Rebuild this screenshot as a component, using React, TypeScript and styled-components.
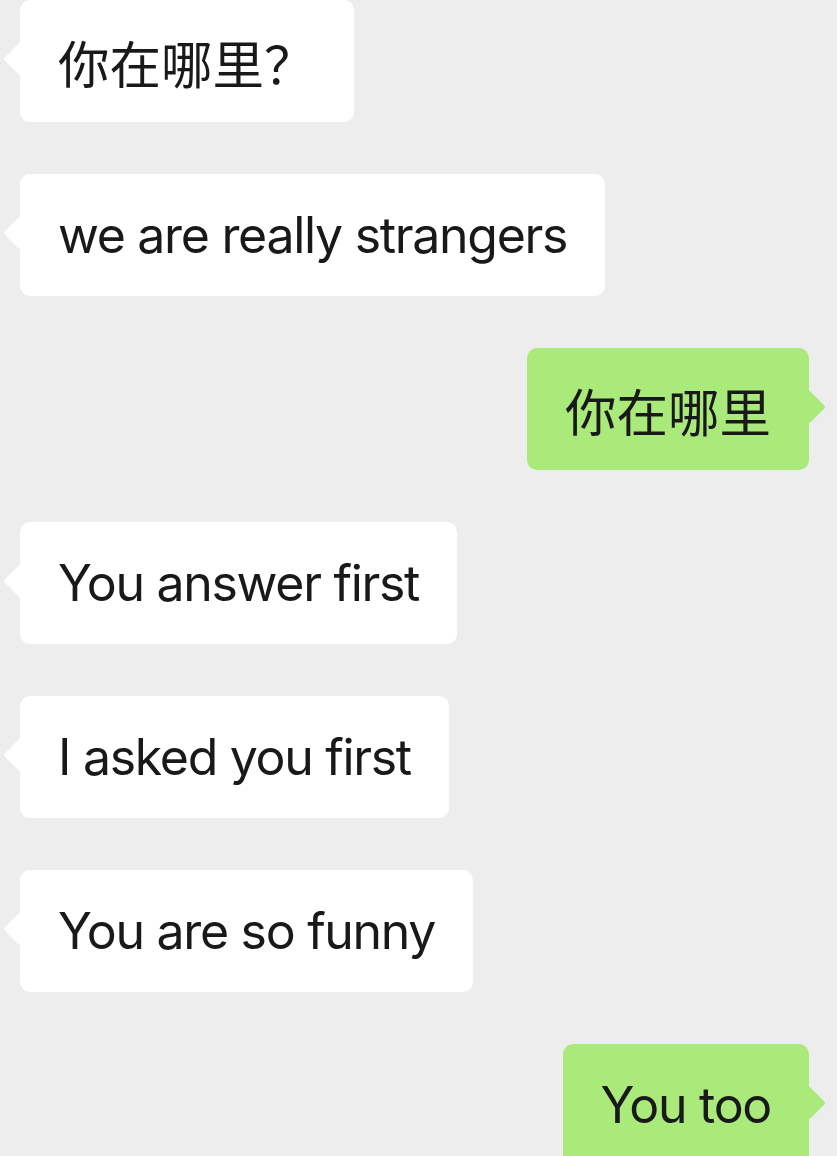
import React from "react";
import styled, { createGlobalStyle, css } from "styled-components";

const Global = createGlobalStyle`
  html, body { margin: 0; padding: 0; background: #ededed; }
  body { overflow: hidden; }
`;

const Chat = styled.div`
  display: flex;
  flex-direction: column;
  gap: 52px;
  padding: 0 28px 0 20px;
  background: #ededed;
  min-height: 1156px;
  box-sizing: border-box;
`;

const Row = styled.div<{ $mine?: boolean }>`
  display: flex;
  justify-content: ${(p) => (p.$mine ? "flex-end" : "flex-start")};
`;

const Bubble = styled.div<{ $mine?: boolean }>`
  position: relative;
  display: flex;
  align-items: center;
  height: 122px;
  box-sizing: border-box;
  padding: 0 38px;
  border-radius: 10px;
  background: ${(p) => (p.$mine ? "#a9ea7a" : "#ffffff")};
  color: #191919;
  white-space: nowrap;

  &::before {
    content: "";
    position: absolute;
    top: 47px;
    width: 24px;
    height: 24px;
    background: inherit;
    border-radius: 3px;
    transform: rotate(45deg);
    ${(p) =>
      p.$mine
        ? css`
            right: -12px;
          `
        : css`
            left: -12px;
          `}
  }
`;

const Text = styled.span<{ $cjk?: boolean }>`
  position: relative;
  font-family: ${(p) =>
    p.$cjk
      ? `"Noto Sans CJK SC", sans-serif`
      : `Inter, "Noto Sans CJK SC", sans-serif`};
  font-size: ${(p) => (p.$cjk ? "51.5px" : "50px")};
  letter-spacing: ${(p) => (p.$cjk ? "0" : "-1.3px")};
`;

const messages: { text: string; mine?: boolean; cjk?: boolean }[] = [
  { text: "你在哪里？", cjk: true },
  { text: "we are really strangers" },
  { text: "你在哪里", mine: true, cjk: true },
  { text: "You answer first" },
  { text: "I asked you first" },
  { text: "You are so funny" },
  { text: "You too", mine: true },
];

export default function App() {
  return (
    <>
      <Global />
      <Chat>
        {messages.map((m, i) => (
          <Row key={i} $mine={m.mine}>
            <Bubble $mine={m.mine}>
              <Text $cjk={m.cjk}>{m.text}</Text>
            </Bubble>
          </Row>
        ))}
      </Chat>
    </>
  );
}
